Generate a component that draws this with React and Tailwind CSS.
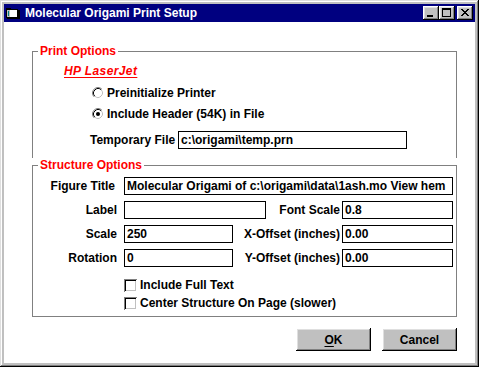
import React from "react";

const bevel =
  "shadow-[inset_-1px_-1px_0_#000,inset_1px_1px_0_#fff,inset_-2px_-2px_0_#808080,inset_2px_2px_0_#dfdfdf]";

function CapButton({ children }) {
  return (
    <div className={`w-[16px] h-[14px] bg-[#c0c0c0] ${bevel}`}>
      <svg width="16" height="14" viewBox="0 0 16 14" shapeRendering="crispEdges">
        {children}
      </svg>
    </div>
  );
}

function TitleIcon() {
  return (
    <svg width="16" height="16" viewBox="0 0 16 16" shapeRendering="crispEdges">
      <rect x="1" y="3" width="5" height="1" fill="#000" />
      <rect x="1" y="4" width="12" height="9" fill="#000" />
      <rect x="2" y="5" width="10" height="7" fill="#fff" />
      <rect x="2" y="5" width="3" height="7" fill="#c0c0c0" />
      <rect x="3" y="6" width="1" height="5" fill="#008080" />
      <rect x="13" y="5" width="2" height="9" fill="#000" />
      <rect x="2" y="13" width="13" height="1" fill="#000" />
    </svg>
  );
}

function Radio({ checked }) {
  return (
    <svg width="12" height="12" viewBox="0 0 12 12" className="shrink-0">
      <circle cx="6" cy="6" r="5.5" fill="#fff" />
      <path d="M2.11 9.89 A5.5 5.5 0 0 1 9.89 2.11" stroke="#808080" fill="none" />
      <path d="M2.82 9.18 A4.5 4.5 0 0 1 9.18 2.82" stroke="#000" fill="none" />
      <path d="M9.18 2.82 A4.5 4.5 0 0 1 2.82 9.18" stroke="#c0c0c0" fill="none" />
      {checked && <circle cx="6" cy="6" r="2" fill="#000" />}
    </svg>
  );
}

function Check() {
  return (
    <span className="block shrink-0 w-[13px] h-[13px] bg-white shadow-[inset_1px_1px_0_#808080,inset_-1px_-1px_0_#fff,inset_2px_2px_0_#000,inset_-2px_-2px_0_#c0c0c0]" />
  );
}

function Field({ className = "", children }) {
  return (
    <div
      className={`h-[18px] border border-black bg-white pl-[2px] flex items-center overflow-hidden whitespace-nowrap ${className}`}
    >
      {children}
    </div>
  );
}

const closeRows = [0, 1, 2, 3, 4, 5, 6];

export default function App() {
  return (
    <div className="w-[479px] h-[367px] bg-[#c0c0c0] p-[4px] flex flex-col font-['Liberation_Sans',Arial,sans-serif] text-[12px] leading-[14px] font-bold text-black shadow-[inset_-1px_-1px_0_#000,inset_1px_1px_0_#dfdfdf,inset_-2px_-2px_0_#808080,inset_2px_2px_0_#fff]">
      {/* Title bar */}
      <div className="h-[18px] shrink-0 bg-[#000080] flex items-center pl-[1px] pr-[2px]">
        <TitleIcon />
        <span className="ml-[4px] flex-1 text-white whitespace-nowrap">
          Molecular Origami Print Setup
        </span>
        <div className="flex items-center">
          <CapButton>
            <rect x="4" y="9" width="6" height="2" fill="#000" />
          </CapButton>
          <CapButton>
            <rect x="3" y="2" width="9" height="2" fill="#000" />
            <rect x="3" y="2" width="1" height="9" fill="#000" />
            <rect x="11" y="2" width="1" height="9" fill="#000" />
            <rect x="3" y="10" width="9" height="1" fill="#000" />
          </CapButton>
          <div className="ml-[2px]">
            <CapButton>
              {closeRows.map((i) => (
                <React.Fragment key={i}>
                  <rect x={4 + i} y={3 + i} width="2" height="1" fill="#000" />
                  <rect x={10 - i} y={3 + i} width="2" height="1" fill="#000" />
                </React.Fragment>
              ))}
            </CapButton>
          </div>
        </div>
      </div>

      {/* Client area */}
      <div className="flex-1 bg-white flex flex-col">
        {/* Print Options */}
        <fieldset className="mt-[22px] ml-[28px] w-[425px] border-t border-x border-[#808080] pb-[9px]">
          <legend className="ml-[5px] px-[2px] text-[#ff0000] leading-[14px]">Print Options</legend>
          <div className="mt-[6px] ml-[31px] h-[14px] flex items-center">
            <span className="italic text-[#ff0000] underline underline-offset-[2px] tracking-[0.4px]">
              HP LaserJet
            </span>
          </div>
          <div className="mt-[8px] ml-[59px] h-[14px] flex items-center">
            <Radio />
            <span className="ml-[3px] whitespace-nowrap">Preinitialize Printer</span>
          </div>
          <div className="mt-[7px] ml-[59px] h-[14px] flex items-center">
            <Radio checked />
            <span className="ml-[3px] whitespace-nowrap">Include Header (54K) in File</span>
          </div>
          <div className="mt-[10px] ml-[57px] flex items-center">
            <span className="w-[82px] whitespace-nowrap">Temporary File</span>
            <Field className="ml-[6px] w-[229px]">{"c:\\origami\\temp.prn"}</Field>
          </div>
        </fieldset>

        {/* Structure Options */}
        <fieldset className="ml-[28px] w-[425px] border border-[#808080] pb-[6px]">
          <legend className="ml-[5px] px-[2px] text-[#ff0000] leading-[14px]">Structure Options</legend>
          <div className="mt-[5px] flex flex-col gap-[6px]">
            <div className="flex items-center">
              <span className="w-[84px] pr-[2px] text-right whitespace-nowrap">Figure Title</span>
              <Field className="ml-[7px] w-[329px]">
                {"Molecular Origami of c:\\origami\\data\\1ash.mo View hem"}
              </Field>
            </div>
            <div className="flex items-center">
              <span className="w-[84px] text-right">Label</span>
              <Field className="ml-[7px] w-[142px]" />
              <span className="w-[74px] text-right whitespace-nowrap">Font Scale</span>
              <Field className="ml-[2px] w-[111px]">0.8</Field>
            </div>
            <div className="flex items-center">
              <span className="w-[84px] text-right">Scale</span>
              <Field className="ml-[7px] w-[109px]">250</Field>
              <span className="w-[107px] text-right whitespace-nowrap">X-Offset (inches)</span>
              <Field className="ml-[2px] w-[111px]">0.00</Field>
            </div>
            <div className="flex items-center">
              <span className="w-[84px] text-right">Rotation</span>
              <Field className="ml-[7px] w-[109px]">0</Field>
              <span className="w-[107px] text-right whitespace-nowrap">Y-Offset (inches)</span>
              <Field className="ml-[2px] w-[111px]">0.00</Field>
            </div>
          </div>
          <div className="mt-[11px] ml-[91px] h-[14px] flex items-center">
            <Check />
            <span className="ml-[3px] whitespace-nowrap">Include Full Text</span>
          </div>
          <div className="mt-[4px] ml-[91px] h-[14px] flex items-center">
            <Check />
            <span className="ml-[3px] whitespace-nowrap">Center Structure On Page (slower)</span>
          </div>
        </fieldset>

        {/* Buttons */}
        <div className="mt-[11px] ml-[28px] w-[425px] flex justify-end gap-[11px]">
          <button className={`w-[75px] h-[23px] bg-[#c0c0c0] ${bevel} flex items-center justify-center`}>
            <span>
              <span className="underline underline-offset-[2px]">O</span>K
            </span>
          </button>
          <button className={`w-[75px] h-[23px] bg-[#c0c0c0] ${bevel} flex items-center justify-center`}>
            Cancel
          </button>
        </div>
      </div>
    </div>
  );
}
